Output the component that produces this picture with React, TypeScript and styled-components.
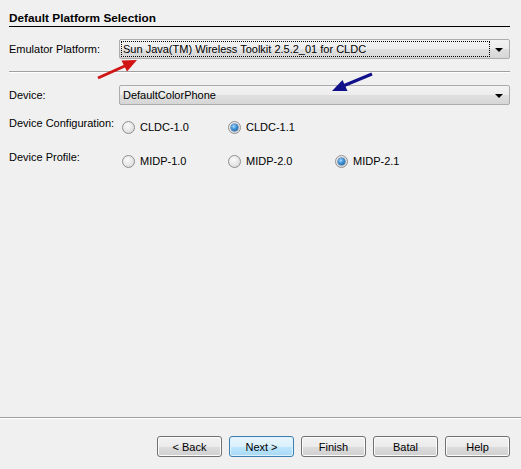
import React from "react";
import styled, { createGlobalStyle, css } from "styled-components";

const Global = createGlobalStyle`
  html, body { margin: 0; padding: 0; background: #f0f0f0; }
  body { font-family: "Liberation Sans", Arial, sans-serif; font-size: 11px; color: #000; }
  * { box-sizing: border-box; }
`;

const Page = styled.div`
  position: relative;
  width: 521px;
  height: 469px;
  display: flex;
  flex-direction: column;
  background: #f0f0f0;
  overflow: hidden;
`;

const Content = styled.div`
  flex: 1;
  padding: 12px 11px 0 9px;
  display: flex;
  flex-direction: column;
`;

const Title = styled.div`
  font-weight: bold;
  font-size: 11.8px;
  line-height: 13px;
  padding-bottom: 1px;
  border-bottom: 1px solid #000;
`;

const FormRow = styled.div<{ $top: number }>`
  display: grid;
  grid-template-columns: 110px 1fr;
  align-items: center;
  margin-top: ${(p) => p.$top}px;
`;

const Label = styled.div`
  line-height: 13px;
  white-space: nowrap;
`;

const Combo = styled.div`
  height: 20px;
  border: 1px solid #acacac;
  border-radius: 2px;
  background: linear-gradient(#f3f3f3 0%, #ececec 50%, #e0e0e0 50%, #d6d6d6 100%);
  display: flex;
  align-items: center;
  padding: 1px;
`;

const ComboText = styled.div<{ $focus?: boolean }>`
  flex: 1;
  height: 16px;
  line-height: 14px;
  padding-left: 1px;
  white-space: nowrap;
  border: 1px solid transparent;
  ${(p) =>
    p.$focus &&
    css`
      border: 1px dotted #000;
    `}
`;

const ComboArrow = styled.div`
  width: 18px;
  display: flex;
  justify-content: center;
  align-items: center;
  &::after {
    content: "";
    width: 0;
    height: 0;
    border-left: 4px solid transparent;
    border-right: 4px solid transparent;
    border-top: 4px solid #000;
    margin-top: 1px;
  }
`;

const Separator = styled.div`
  margin-top: 12px;
  height: 2px;
  border-top: 1px solid #a0a0a0;
  border-bottom: 1px solid #ffffff;
`;

const RadioRow = styled.div<{ $top: number }>`
  display: grid;
  grid-template-columns: 110px 1fr;
  align-items: start;
  margin-top: ${(p) => p.$top}px;
`;

const RadioGroup = styled.div`
  display: grid;
  grid-template-columns: 106px 107px 107px;
  padding-left: 3px;
  padding-top: 4px;
`;

const RadioItem = styled.label`
  display: flex;
  align-items: center;
  gap: 5px;
  line-height: 13px;
  white-space: nowrap;
`;

const RadioCircle = styled.span<{ $checked?: boolean }>`
  width: 13px;
  height: 13px;
  border-radius: 50%;
  border: 1px solid #8f8f8f;
  background: radial-gradient(circle at 40% 35%, #fbfbfb 0%, #e6e6e6 55%, #cfcfcf 100%);
  display: flex;
  align-items: center;
  justify-content: center;
  flex-shrink: 0;
  ${(p) =>
    p.$checked &&
    css`
      &::after {
        content: "";
        width: 7px;
        height: 7px;
        border-radius: 50%;
        background: radial-gradient(circle at 40% 35%, #a9dcff 0%, #3a8fd6 45%, #154f8f 100%);
        box-shadow: 0 0 0 0.5px #1c4e84;
      }
    `}
`;

const Footer = styled.div`
  height: 52px;
  border-top: 1px solid #a0a0a0;
  box-shadow: inset 0 1px 0 #ffffff;
  display: flex;
  justify-content: flex-end;
  align-items: flex-start;
  gap: 7px;
  padding: 18px 11px 0 0;
`;

const Button = styled.button<{ $default?: boolean }>`
  width: 65px;
  height: 21px;
  padding: 0;
  font-family: "Liberation Sans", Arial, sans-serif;
  font-size: 11px;
  color: #000;
  border-radius: 3px;
  border: 1px solid #707070;
  background: linear-gradient(#f2f2f2 0%, #ebebeb 50%, #dddddd 50%, #cfcfcf 100%);
  box-shadow: inset 0 0 0 1px #fcfcfc;
  ${(p) =>
    p.$default &&
    css`
      border-color: #3c7fb1;
      background: linear-gradient(#eaf6fd 0%, #d9f0fc 50%, #bee6fd 50%, #a7d9f5 100%);
      box-shadow: inset 0 0 0 1px #dff2fc;
    `}
`;

const Overlay = styled.svg`
  position: absolute;
  left: 0;
  top: 0;
  pointer-events: none;
`;

const Radio: React.FC<{ label: string; checked?: boolean }> = ({ label, checked }) => (
  <RadioItem>
    <RadioCircle $checked={checked} />
    {label}
  </RadioItem>
);

export default function App() {
  return (
    <>
      <Global />
      <Page>
        <Content>
          <Title>Default Platform Selection</Title>
          <FormRow $top={12}>
            <Label>Emulator Platform:</Label>
            <Combo>
              <ComboText $focus>Sun Java(TM) Wireless Toolkit 2.5.2_01 for CLDC</ComboText>
              <ComboArrow />
            </Combo>
          </FormRow>
          <Separator />
          <FormRow $top={12}>
            <Label>Device:</Label>
            <Combo>
              <ComboText>DefaultColorPhone</ComboText>
              <ComboArrow />
            </Combo>
          </FormRow>
          <RadioRow $top={12}>
            <Label>Device Configuration:</Label>
            <RadioGroup>
              <Radio label="CLDC-1.0" />
              <Radio label="CLDC-1.1" checked />
            </RadioGroup>
          </RadioRow>
          <RadioRow $top={17}>
            <Label>Device Profile:</Label>
            <RadioGroup>
              <Radio label="MIDP-1.0" />
              <Radio label="MIDP-2.0" />
              <Radio label="MIDP-2.1" checked />
            </RadioGroup>
          </RadioRow>
        </Content>
        <Footer>
          <Button>&lt; Back</Button>
          <Button $default>Next &gt;</Button>
          <Button>Finish</Button>
          <Button>Batal</Button>
          <Button>Help</Button>
        </Footer>
        <Overlay width="521" height="469" viewBox="0 0 521 469">
          <line x1="98" y1="78" x2="127" y2="65" stroke="#d11414" strokeWidth="3" />
          <polygon points="137,60 121.5,60.5 127,71.5" fill="#d11414" />
          <line x1="372" y1="74" x2="343" y2="86" stroke="#10108a" strokeWidth="3" />
          <polygon points="332,91 347.5,91 342.5,80" fill="#10108a" />
        </Overlay>
      </Page>
    </>
  );
}
